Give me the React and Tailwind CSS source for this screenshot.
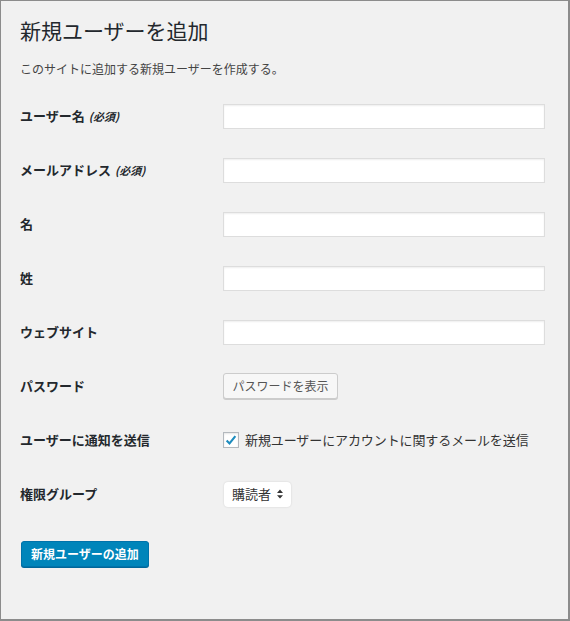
import React, { useState } from "react";

const font = { fontFamily: '"Noto Sans CJK JP", "Noto Sans", sans-serif' };

const TextRow = ({ label, required }) => (
  <div className="flex h-[54px] items-center">
    <div className="w-[203px] text-[13px] font-bold text-[#23282d]">
      {label}
      {required && <span className="ml-1 text-[11px] italic font-bold">(必須)</span>}
    </div>
    <input
      type="text"
      className="h-[25px] w-[322px] border border-[#ddd] bg-white shadow-[inset_0_1px_2px_rgba(0,0,0,0.07)] outline-none"
    />
  </div>
);

const App = () => {
  const [notify, setNotify] = useState(true);

  return (
    <div
      style={font}
      className="h-[621px] w-[570px] border border-r-2 border-b-2 border-[#8c8c8c] bg-[#f1f1f1] pl-[19px] text-[#23282d]"
    >
      <h1 className="pt-[15px] text-[21px] leading-[28px] font-normal">新規ユーザーを追加</h1>
      <p className="mt-[16px] text-[12px] leading-[18px] text-[#444]">
        このサイトに追加する新規ユーザーを作成する。
      </p>
      <div className="mt-[11px]">
        <TextRow label="ユーザー名" required />
        <TextRow label="メールアドレス" required />
        <TextRow label="名" />
        <TextRow label="姓" />
        <TextRow label="ウェブサイト" />
        <div className="flex h-[54px] items-center">
          <div className="w-[203px] text-[13px] font-bold">パスワード</div>
          <button className="h-[26px] w-[115px] rounded-[3px] border border-[#ccc] bg-[#f7f7f7] text-[12px] text-[#555] shadow-[0_1px_0_#ccc]">
            パスワードを表示
          </button>
        </div>
        <div className="flex h-[54px] items-center">
          <div className="w-[203px] text-[13px] font-bold">ユーザーに通知を送信</div>
          <label className="flex items-center gap-[6px] text-[13px] tracking-[-0.1px] text-[#333]">
            <span
              onClick={() => setNotify(!notify)}
              className="flex h-[16px] w-[16px] items-center justify-center border border-[#b4b9be] bg-white shadow-[inset_0_1px_2px_rgba(0,0,0,0.1)]"
            >
              {notify && (
                <svg viewBox="0 0 16 16" className="h-[14px] w-[14px]">
                  <path d="M3 8.5 L6.3 12 L13 3.5" fill="none" stroke="#1e8cbe" strokeWidth="2.4" />
                </svg>
              )}
            </span>
            新規ユーザーにアカウントに関するメールを送信
          </label>
        </div>
        <div className="flex h-[54px] items-center">
          <div className="w-[203px] text-[13px] font-bold">権限グループ</div>
          <div className="ml-[1px] flex h-[25px] w-[67px] items-center justify-between rounded-[4px] bg-white pl-[8px] pr-[8px] text-[13px] text-[#333] shadow-[0_0_2px_rgba(0,0,0,0.15)]">
            購読者
            <svg viewBox="0 0 8 12" className="h-[10px] w-[6px]">
              <path d="M4 0 L8 4.5 H0 Z M4 12 L8 7.5 H0 Z" fill="#333" />
            </svg>
          </div>
        </div>
      </div>
      <button className="mt-[20px] ml-[1px] h-[26px] w-[128px] rounded-[3px] border border-[#0073aa] bg-[#0085ba] text-[12px] font-bold text-white shadow-[0_1px_0_#006799]">
        新規ユーザーの追加
      </button>
    </div>
  );
};

export default App;
